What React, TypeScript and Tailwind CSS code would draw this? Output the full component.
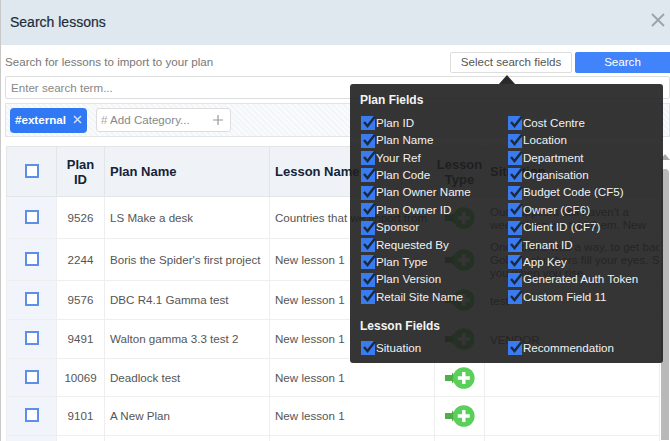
import React from "react";

const rows = [
  { id: "9526", name: "LS Make a desk", lesson: "Countries that we import from", h: "h-[42px]", sit: ["Our suppliers still haven't a", "week since we told them. New"] },
  { id: "2244", name: "Boris the Spider's first project", lesson: "New lesson 1", h: "h-[42px]", sit: ["Once there was a way, to get back", "Golden slumbers fill your eyes. S", "you when you rise"] },
  { id: "9576", name: "DBC R4.1 Gamma test", lesson: "New lesson 1", h: "h-[39px]", sit: ["test"] },
  { id: "9491", name: "Walton gamma 3.3 test 2", lesson: "New lesson 1", h: "h-[39px]", sit: ["VENDOR"] },
  { id: "10069", name: "Deadlock test", lesson: "New lesson 1", h: "h-[38px]", sit: [] },
  { id: "9101", name: "A New Plan", lesson: "New lesson 1", h: "h-[39px]", sit: [] },
];

const left = ["Plan ID", "Plan Name", "Your Ref", "Plan Code", "Plan Owner Name", "Plan Owner ID", "Sponsor", "Requested By", "Plan Type", "Plan Version", "Retail Site Name"];
const right = ["Cost Centre", "Location", "Department", "Organisation", "Budget Code (CF5)", "Owner (CF6)", "Client ID (CF7)", "Tenant ID", "App Key", "Generated Auth Token", "Custom Field 11"];

function Check() {
  return (
    <svg width="15" height="15" viewBox="0 0 15 15" className="shrink-0">
      <rect x="0" y="1" width="14" height="14" fill="#3a7bf0" />
      <path d="M3 7 L6.5 11 L14 1.5" fill="none" stroke="#1c2a3f" strokeWidth="2.4" />
    </svg>
  );
}

function Field({ label }: { label: string }) {
  return (
    <div className="flex h-[17.4px] items-center text-[11.6px] leading-none text-[#f2f2f2]">
      <Check />
      <span>{label}</span>
    </div>
  );
}

function AddIcon() {
  return (
    <svg width="30" height="22" viewBox="0 0 30 22" className="mx-auto block">
      <path d="M0 8 H7 V5.5 L12 11 L7 16.5 V14 H0 Z" fill="#4fae4a" />
      <circle cx="18.8" cy="11" r="10.8" fill="#5ad05a" />
      <path d="M18.8 5 V17 M12.8 11 H24.8" stroke="#fff" strokeWidth="3.4" />
    </svg>
  );
}

function Box() {
  return <div className="mb-[2px] ml-[18px] size-[14px] border-2 border-[#5b8fe8] bg-white" />;
}

export default function App() {
  return (
    <div className="relative h-[441px] w-[670px] overflow-hidden border-l border-l-[#c9c9c9] bg-white font-['Liberation_Sans',Arial,sans-serif] text-[11.6px] text-[#555]">
      <header className="flex h-[45px] items-center justify-between bg-[#dee8ee] pl-[9px] pr-[5px]">
        <h1 className="text-[14px] font-normal text-[#1d2b3a] [-webkit-text-stroke:0.2px_#1d2b3a]">Search lessons</h1>
        <svg width="14" height="14" viewBox="0 0 14 14" className="mb-[5px]">
          <path d="M1 1 L13 13 M13 1 L1 13" stroke="#9aa5ad" strokeWidth="2" />
        </svg>
      </header>

      <div className="flex h-[31px] items-center pl-[4px] pt-[3px]">
        <span className="flex-1 text-[#777]">Search for lessons to import to your plan</span>
        <button className="flex h-[21px] w-[122px] items-center justify-center rounded-[2px] border border-[#ddd] bg-white text-[#555]">Select search fields</button>
        <button className="ml-[3px] flex h-[21px] w-[95px] items-center justify-center rounded-l-[2px] bg-[#4083fb] text-white">Search</button>
      </div>

      <div className="ml-[4px] flex h-[23px] items-center rounded-[2px] border border-[#ddd] bg-white pl-[5px] text-[#888]">Enter search term...</div>

      <div className="ml-[4px] mt-[4px] flex h-[34px] items-center gap-[9px] border border-[#e2e5e8] bg-[repeating-linear-gradient(45deg,#f3f5f8,#f3f5f8_2px,#fafbfc_2px,#fafbfc_4px)] pl-[4px]">
        <span className="flex h-[25px] w-[77px] items-center rounded-[4px] bg-[#3078f4] pl-[5px] font-bold text-white">
          #external
          <svg width="9" height="9" viewBox="0 0 9 9" className="mb-[2px] ml-[7px]"><path d="M1 1 L8 8 M8 1 L1 8" stroke="#cfe0fb" strokeWidth="1.5" /></svg>
        </span>
        <span className="flex h-[24px] w-[135px] items-center justify-between rounded-[3px] border border-[#ddd] bg-white pl-[4px] pr-[7px] text-[#888]">
          <span><span className="text-[#aaa]">#</span> Add Category...</span>
          <svg width="10" height="10" viewBox="0 0 10 10"><path d="M5 0 V10 M0 5 H10" stroke="#999" strokeWidth="1.2" /></svg>
        </span>
      </div>

      <div className="ml-[5px] mt-[9px] flex">
        <table className="w-[654px] table-fixed border-collapse text-[#555]">
          <colgroup>
            <col className="w-[50px]" />
            <col className="w-[48px]" />
            <col className="w-[165px]" />
            <col className="w-[165px]" />
            <col className="w-[50px]" />
            <col />
          </colgroup>
          <thead>
            <tr className="h-[50px] bg-[#eff3f7] text-[13px] font-bold leading-[15px] text-[#14233a]">
              <th className="border border-[#e3e6e9]"><Box /></th>
              <th className="border border-[#e3e6e9] text-center">Plan<br />ID</th>
              <th className="border border-[#e3e6e9] pl-[5px] text-left">Plan Name</th>
              <th className="overflow-hidden whitespace-nowrap border border-[#e3e6e9] pl-[5px] text-left">Lesson Name</th>
              <th className="border border-[#e3e6e9] text-center">Lesson<br />Type</th>
              <th className="border border-[#e3e6e9] pl-[5px] text-left">Situation</th>
            </tr>
          </thead>
          <tbody>
            {rows.map((r) => (
              <tr key={r.id} className={r.h}>
                <td className="border border-[#eeeeee] bg-[#f1f5fb]"><Box /></td>
                <td className="border border-[#eeeeee] text-center">{r.id}</td>
                <td className="overflow-hidden whitespace-nowrap border border-[#eeeeee] pl-[5px]">{r.name}</td>
                <td className="overflow-hidden whitespace-nowrap border border-[#eeeeee] pl-[5px]">{r.lesson}</td>
                <td className="border border-[#eeeeee]"><AddIcon /></td>
                <td className="overflow-hidden whitespace-nowrap border border-[#eeeeee] pl-[5px] leading-[13px]">
                  {r.sit.map((s) => <div key={s}>{s}</div>)}
                </td>
              </tr>
            ))}
            <tr className="h-[20px]">
              <td className="border-x border-[#eeeeee] bg-[#f1f5fb]" />
              <td className="border-x border-[#eeeeee]" />
              <td className="border-x border-[#eeeeee]" />
              <td className="border-x border-[#eeeeee]" />
              <td className="border-x border-[#eeeeee]" />
              <td className="border-x border-[#eeeeee]" />
            </tr>
          </tbody>
        </table>
        <div className="flex h-[294px] w-[10px] flex-col items-center pt-[8px]">
          <div className="h-0 w-0 border-x-[5px] border-b-[6px] border-x-transparent border-b-[#aaa]" />
          <div className="mt-[9px] w-[8px] flex-1 rounded-t-[4px] bg-[#b9b9b9]" />
        </div>
      </div>

      {/* Field picker popover */}
      <div className="absolute left-[349px] top-[84px] h-[279px] w-[313px] rounded-[3px] bg-[#1f1f1f]/90 pl-[10px] pt-[9px]">
        <div className="absolute left-[149px] top-[-9px] h-0 w-0 border-x-[8px] border-b-[9px] border-x-transparent border-b-[#2a2a2a]" />
        <h3 className="text-[12px] font-bold leading-[15px] text-[#f4f4f4]">Plan Fields</h3>
        <div className="mt-[6px] grid grid-cols-[147px_1fr] pl-[1px]">
          <div>{left.map((f) => <Field key={f} label={f} />)}</div>
          <div>{right.map((f) => <Field key={f} label={f} />)}</div>
        </div>
        <h3 className="mt-[14px] text-[12px] font-bold leading-[15px] text-[#f4f4f4]">Lesson Fields</h3>
        <div className="mt-[5px] grid grid-cols-[147px_1fr] pl-[1px]">
          <Field label="Situation" />
          <Field label="Recommendation" />
        </div>
      </div>
    </div>
  );
}
